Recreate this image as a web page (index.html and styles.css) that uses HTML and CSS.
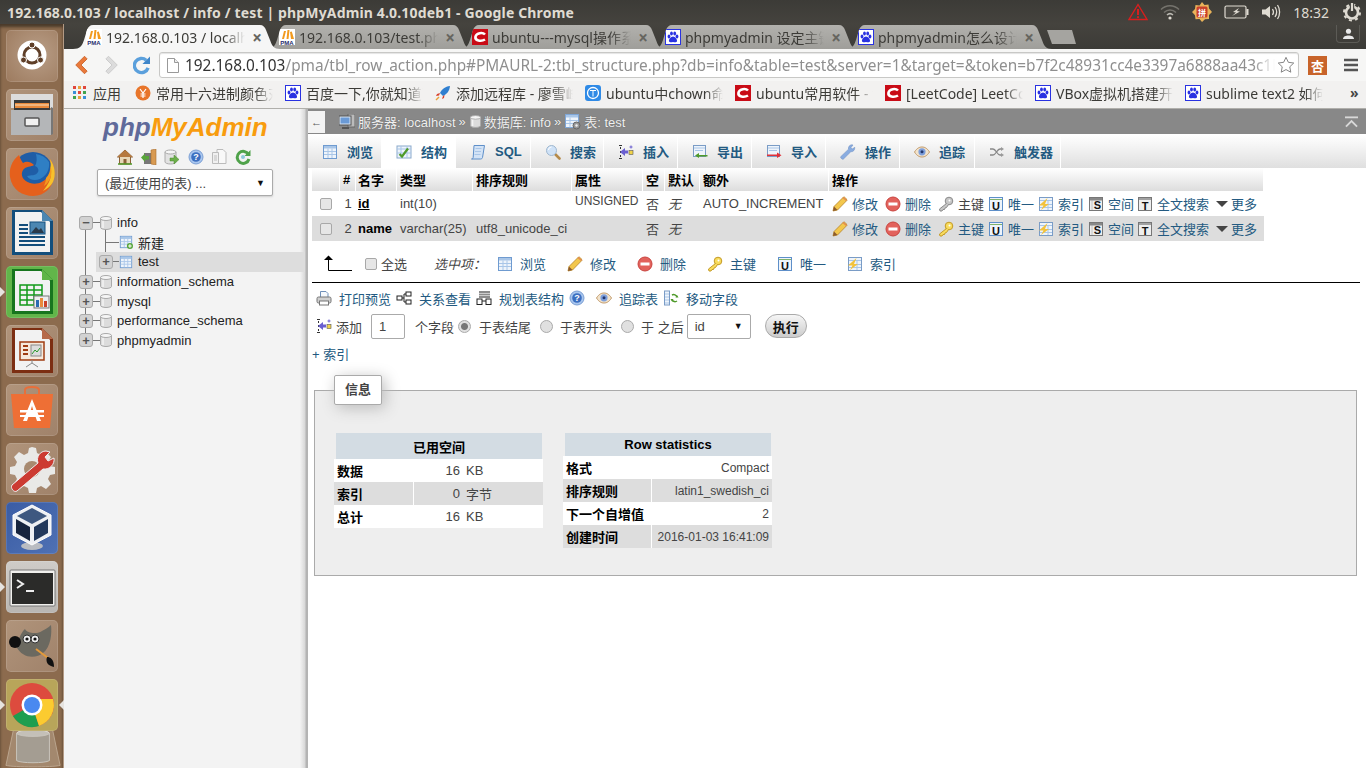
FILE: index.html
```html
<!DOCTYPE html>
<html lang="zh">
<head>
<meta charset="utf-8">
<title>192.168.0.103 / localhost / info / test | phpMyAdmin 4.0.10deb1</title>
<link rel="stylesheet" href="styles.css">
</head>
<body>
<svg class="sprite" width="0" height="0" aria-hidden="true">
<defs>
<symbol id="i-table" viewBox="0 0 16 16"><rect x="1.500" y="1.500" width="13" height="13" fill="#eef4fb" stroke="#6f9bd0"/><rect x="2" y="2" width="12" height="2.500" fill="#a9c6e8"/><path d="M2 7.500h12M2 10.500h12M6 4.500v9.500M10 4.500v9.500" stroke="#a9c6e8" fill="none"/></symbol>
<symbol id="i-struct" viewBox="0 0 16 16"><rect x="1" y="2" width="14" height="12" fill="#eef4fb" stroke="#8aa9cc"/><path d="M5 2v12M11 2v12M1 5h14M1 9h14" stroke="#a9c6e8"/><path d="M3.500 10l2.500 2.500 6-8" stroke="#4f9a2a" stroke-width="2.200" fill="none"/></symbol>
<symbol id="i-sql" viewBox="0 0 16 16"><path d="M4 1.500h10.500l-2 12c-.2 1-1 1.500-2 1.500H1.500c1 0 1.500-.6 1.700-1.500z" fill="#d3e3f6" stroke="#5e8fc9"/><path d="M5.500 4.500h6M5 7.500h6M4.500 10.500h6" stroke="#a9c6e8"/></symbol>
<symbol id="i-search" viewBox="0 0 16 16"><path d="M9.500 9.500l5 5" stroke="#b58a4a" stroke-width="2.600" stroke-linecap="round"/><circle cx="6.500" cy="6.500" r="5" fill="#cfe2f7" stroke="#9fb7cf"/><path d="M3.500 6a3 3 0 0 1 3-3" stroke="#fff" fill="none"/></symbol>
<symbol id="i-insert" viewBox="0 0 16 16"><path d="M1 1.500h3M1 14.500h3M2.500 3v2M2.500 7v2M2.500 11v2" stroke="#333" fill="none"/><path d="M2 8l5-4v2.500h3v3H7V12z" fill="#6a5fd0"/><rect x="11" y="6.500" width="4" height="4" fill="#f1d34a" stroke="#555" stroke-width=".6"/><path d="M13 1.500v3M11.500 3h3" stroke="#6a5fd0"/></symbol>
<symbol id="i-export" viewBox="0 0 16 16"><rect x="1.500" y="1.500" width="12" height="11" fill="#eef4fb" stroke="#7a9cc6"/><path d="M2 4h11M3 6.500h8" stroke="#a9c6e8"/><path d="M15.500 11H7V9l-4 2.500L7 14v-1.500h8.500z" fill="#4f9a2a"/></symbol>
<symbol id="i-import" viewBox="0 0 16 16"><rect x="1.500" y="1.500" width="12" height="11" fill="#eef4fb" stroke="#7a9cc6"/><path d="M2 4h11M3 6.500h8" stroke="#a9c6e8"/><path d="M1 10.500h10V8.500l4.500 2.800L11 14v-2H1z" fill="#e0323a"/></symbol>
<symbol id="i-wrench" viewBox="0 0 16 16"><path d="M2 15c-1-.7-1.600-1.500-1.300-2.300L8.500 5.200C8 3 9.500.8 12 .8l1 .2-2 2.500 1.200 1.500 2.600-1.700c.3 2.600-1.500 4.700-4 4.500L3.500 15c-.5.400-1 .400-1.500 0z" fill="#89ace0" stroke="#6f8fc0" stroke-width=".5"/></symbol>
<symbol id="i-eye" viewBox="0 0 16 16"><path d="M.5 8C3 4 5.500 3 8 3s5 1 7.500 5C13 12 10.500 13 8 13S3 12 .5 8z" fill="#f2e3cc" stroke="#c29a6a"/><circle cx="8" cy="7.800" r="3.600" fill="#7d9fdc"/><circle cx="8" cy="7.800" r="1.500" fill="#23376d"/></symbol>
<symbol id="i-trigger" viewBox="0 0 16 16"><path d="M1 5h3c3 0 4 6 7 6h2M1 11h3c3 0 4-6 7-6h2" stroke="#888" stroke-width="1.300" fill="none"/><path d="M12 3l3 2-3 2zM12 9l3 2-3 2z" fill="#999"/></symbol>
<symbol id="i-pencil" viewBox="0 0 16 16"><path d="M1 15l1-4.500L11.500 1c.8-.5 2.800 1.200 3.500 3.300L5.500 14z" fill="#f3c74c" stroke="#b5842c" stroke-width=".8"/><path d="M1 15l1-4.500 3.500 3.500z" fill="#8c5a2c"/><path d="M11 1.500l3.500 3" stroke="#e48a52" stroke-width="1.500"/></symbol>
<symbol id="i-del" viewBox="0 0 16 16"><circle cx="8" cy="8" r="7" fill="#e2625c" stroke="#c9443f"/><rect x="3.500" y="6.500" width="9" height="3" fill="#fff"/></symbol>
<symbol id="i-key" viewBox="0 0 16 16"><circle cx="11" cy="5" r="3.800" fill="#f8dc5d" stroke="#c49a26"/><path d="M8.500 7.500L1.500 13l.5 2h2l1-1.500h1.500l.5-1.500 1.500-.5 2-3" fill="#f8dc5d" stroke="#c49a26"/><circle cx="11.500" cy="4.500" r="1" fill="#fff"/></symbol>
<symbol id="i-keyg" viewBox="0 0 16 16"><circle cx="11" cy="5" r="3.800" fill="#c6c6c6" stroke="#8a8a8a"/><path d="M8.500 7.500L1.500 13l.5 2h2l1-1.500h1.500l.5-1.500 1.500-.5 2-3" fill="#c6c6c6" stroke="#8a8a8a"/><circle cx="11.500" cy="4.500" r="1" fill="#fff"/></symbol>
<symbol id="i-unique" viewBox="0 0 16 16"><rect x="1.500" y="1.500" width="13" height="13" fill="#eef4fb" stroke="#5e8fc9"/><path d="M2 3.500h12" stroke="#7fb26a"/><text x="8" y="13.500" text-anchor="middle" class="ictext">U</text></symbol>
<symbol id="i-index" viewBox="0 0 16 16"><rect x="1.500" y="1.500" width="13" height="13" fill="#eef4fb" stroke="#7a9cc6"/><path d="M2 4.500h12M10 4.500v9.500M2 8.500h12M2 11.500h12" stroke="#a9c6e8"/><path d="M9.500 2L1 9.500h4.500L3 14l8-6H7z" fill="#f2c23c"/></symbol>
<symbol id="i-space" viewBox="0 0 16 16"><rect x="1.500" y="1.500" width="13" height="13" fill="#eee" stroke="#777"/><rect x="2" y="2" width="12" height="2.500" fill="#888"/><path d="M4 4.500v9.500" stroke="#999" stroke-dasharray="1 1"/><text x="9.500" y="13" text-anchor="middle" class="ictext">S</text></symbol>
<symbol id="i-fulltext" viewBox="0 0 16 16"><rect x="1.500" y="1.500" width="13" height="13" fill="#eee" stroke="#777"/><path d="M2 3h12" stroke="#555"/><text x="8" y="13.500" text-anchor="middle" class="ictext">T</text></symbol>
<symbol id="i-print" viewBox="0 0 16 16"><path d="M4.500 7V1.500h5.500l2 2V7" fill="#f5f8fc" stroke="#6f8fb8"/><rect x="1" y="7" width="14" height="6" rx="1.500" fill="#cfcfcf" stroke="#777"/><rect x="3.500" y="11" width="9" height="4" fill="#fff" stroke="#777"/></symbol>
<symbol id="i-rel" viewBox="0 0 16 16"><rect x="1" y="6" width="5" height="4" fill="#fff" stroke="#222"/><rect x="10" y="2" width="5" height="4" fill="#fff" stroke="#222"/><rect x="10" y="10" width="5" height="4" fill="#fff" stroke="#222"/><path d="M6 8h2V4h2M8 8v4h2" stroke="#222" fill="none"/></symbol>
<symbol id="i-schema" viewBox="0 0 16 16"><rect x="3" y="1" width="11" height="7" fill="#8c8c8c"/><path d="M3 3.500h11M3 5.500h11" stroke="#ccc"/><rect x="1" y="9" width="5" height="5.500" fill="#fff" stroke="#222"/><rect x="10" y="9" width="5" height="5.500" fill="#fff" stroke="#222"/><path d="M6 11h4" stroke="#222"/></symbol>
<symbol id="i-help" viewBox="0 0 16 16"><circle cx="8" cy="8" r="7" fill="#a9c6ee" stroke="#7b9fd4"/><circle cx="8" cy="8" r="4.800" fill="#3c6fc0"/><text x="8" y="11" text-anchor="middle" class="ichelp">?</text></symbol>
<symbol id="i-move" viewBox="0 0 16 16"><rect x="1.500" y="1" width="5" height="14" fill="#eef4fb" stroke="#7a9cc6"/><path d="M2 4h4M2 7h4M2 10h4M2 13h4" stroke="#a9c6e8"/><path d="M9 5a3.500 3.500 0 0 1 5 2M14 11a3.500 3.500 0 0 1-5-1" stroke="#4f9a2a" stroke-width="1.500" fill="none"/><path d="M12.500 7.500h3l-1.500-2.500zM10.500 9h-3l1.500 2.500z" fill="#4f9a2a"/></symbol>
<symbol id="i-db" viewBox="0 0 12 14"><path d="M.5 2.500v9c0 1 2.500 2 5.500 2s5.500-1 5.500-2v-9z" fill="#dcdcdc" stroke="#aaa"/><ellipse cx="6" cy="2.500" rx="5.500" ry="2" fill="#f5f5f5" stroke="#aaa"/><path d="M3 5v7" stroke="#fff"/></symbol>
<symbol id="i-home" viewBox="0 0 16 16"><path d="M8 1L.5 8h2v7h11V8h2z" fill="#e8d8b8" stroke="#8a6238"/><path d="M8 1L.5 8h15z" fill="#b6793e"/><rect x="6.500" y="10" width="3" height="5" fill="#8a6238"/><path d="M1 15h14" stroke="#4f9a2a" stroke-width="1.500"/></symbol>
<symbol id="i-exit" viewBox="0 0 16 16"><rect x="3" y="4" width="7" height="11" fill="#777"/><path d="M10 1l5-1v16l-5-1z" fill="#d89a52" stroke="#a96f30" stroke-width=".6"/><path d="M0 8.500l4-4v2.500h4v3.500H4v2.500z" fill="#58a63a"/></symbol>
<symbol id="i-dbgo" viewBox="0 0 16 16"><path d="M1 3v10c0 1 2.500 2 5.500 2s5.500-1 5.500-2V3z" fill="#e2e2e2" stroke="#aaa"/><ellipse cx="6.500" cy="3" rx="5.500" ry="2" fill="#f6f6f6" stroke="#aaa"/><path d="M6 9h4V6l5 4.500-5 4.500v-3H6z" fill="#6cae4a" stroke="#4a8a2c" stroke-width=".5"/></symbol>
<symbol id="i-docs" viewBox="0 0 16 16"><path d="M6 .5h6l3 3v11H6z" fill="#f8f8f8" stroke="#bbb"/><path d="M1.500 3.500h6v11h-6z" fill="#f0f0f0" stroke="#bbb"/><rect x="3" y="6" width="3" height="6" fill="#d8d8d8"/></symbol>
<symbol id="i-reload" viewBox="0 0 16 16"><path d="M13.500 5.500A6 6 0 1 0 14 10" stroke="#4fa24a" stroke-width="3" fill="none"/><path d="M9.500 7h6V1z" fill="#4fa24a"/><circle cx="8" cy="8" r="2" fill="#8cc9d8"/></symbol>
<symbol id="i-tableadd" viewBox="0 0 16 16"><rect x="1.500" y="1.500" width="13" height="13" fill="#eef4fb" stroke="#6f9bd0"/><rect x="2" y="2" width="12" height="2.500" fill="#a9c6e8"/><path d="M2 7.500h12M2 10.500h12M6 4.500v9.500M10 4.500v9.500" stroke="#a9c6e8"/><circle cx="12.500" cy="12.500" r="3.500" fill="#58a63a"/><path d="M10.500 12.500h4M12.500 10.500v4" stroke="#fff" stroke-width="1.200"/></symbol>
<symbol id="i-server" viewBox="0 0 16 16"><rect x="9" y="0" width="7" height="13" fill="#bbb" stroke="#666"/><rect x="0" y="2" width="12" height="9" fill="#d8e4f2" stroke="#555"/><rect x="1.500" y="3.500" width="9" height="6" fill="#6a9ad6"/><path d="M3 14h7" stroke="#555" stroke-width="2"/></symbol>
<symbol id="i-tblgear" viewBox="0 0 16 16"><rect x=".5" y=".5" width="13" height="13" fill="#eef4fb" stroke="#7fa6d6"/><rect x="1" y="1" width="12" height="2.500" fill="#a9c6e8"/><path d="M1 6.500h12M1 9.500h12M5 3.500v10" stroke="#a9c6e8"/><circle cx="11.500" cy="11.500" r="3.500" fill="#999" stroke="#666"/><circle cx="11.500" cy="11.500" r="1.200" fill="#eee"/></symbol>
<symbol id="f-pma" viewBox="0 0 16 16"><rect width="16" height="16" fill="#fff"/><path d="M3 10l2-8h2L5 10zM7.500 10l1-9h2l-1 9zM12 10l-1-7 1.800-.5L15 10z" fill="#f29a1e"/><text x="8" y="15.500" text-anchor="middle" class="fpma">PMA</text></symbol>
<symbol id="f-csdn" viewBox="0 0 16 16"><rect width="16" height="16" fill="#c90b16"/><path d="M13 5.500C11 3.300 4.500 3.500 3.500 7.500S9 13 13 10.500" fill="none" stroke="#fff" stroke-width="2.600"/></symbol>
<symbol id="f-paw" viewBox="0 0 16 16"><rect x=".5" y=".5" width="15" height="15" fill="#fff" stroke="#2932e1"/><ellipse cx="4" cy="7.500" rx="1.400" ry="1.900" fill="#2932e1"/><ellipse cx="6.500" cy="4.500" rx="1.400" ry="1.900" fill="#2932e1"/><ellipse cx="9.700" cy="4.500" rx="1.400" ry="1.900" fill="#2932e1"/><ellipse cx="12" cy="7.500" rx="1.400" ry="1.900" fill="#2932e1"/><path d="M8 7.500c-2 0-4.500 3-4 4.800.4 1.300 2.500 1 4 .7 1.500.3 3.600.6 4-.7.500-1.800-2-4.800-4-4.800z" fill="#2932e1"/></symbol>
</defs>
</svg>

<header class="titlebar">
  <span class="wintitle">192.168.0.103 / localhost / info / test | phpMyAdmin 4.0.10deb1 - Google Chrome</span>
  <div class="indicators">
    <svg class="ind w20" viewBox="0 0 20 18"><path d="M10 1.500L19 16.500H1z" fill="none" stroke="#d81e1e" stroke-width="1.400"/><path d="M10 6v6" stroke="#d81e1e" stroke-width="2"/><circle cx="10" cy="14.200" r="1.100" fill="#d81e1e"/></svg>
    <svg class="ind w20" viewBox="0 0 20 16"><path d="M1 5.500c5-5 13-5 18 0M4 8.500c3.500-3.500 8.500-3.500 12 0" fill="none" stroke="#75736d" stroke-width="1.500"/><path d="M7 11c2-1.800 4-1.800 6 0" fill="none" stroke="#bdbbb4" stroke-width="1.500"/><circle cx="10" cy="14" r="1.600" fill="#dfdbd2"/></svg>
    <svg class="ind w20" viewBox="0 0 20 20"><path d="M10 0l2.500 3 4-.5.500 4 3 3.500-3 3 .0 4-4 .3L10 20l-2.500-3-4 .3-.5-4-3-3.300 3-3 .5-4 4 .5z" fill="#e9b35a"/><rect x="4.500" y="4.500" width="11" height="11" rx="1.500" fill="#c9402a"/><text x="10" y="13.500" text-anchor="middle" class="pin">拼</text></svg>
    <svg class="ind w25" viewBox="0 0 25 14"><rect x="1" y="1" width="21" height="12" rx="1.500" fill="#4a4843" stroke="#dfdbd2" stroke-width="1.200"/><rect x="22.500" y="4" width="2" height="6" fill="#dfdbd2"/><path d="M15 3l-6 4 3 .5-4 3.500 8-4.500-3-.5z" fill="#dfdbd2"/></svg>
    <svg class="ind w20" viewBox="0 0 20 16"><path d="M1 5.500h3.500L9 2v12l-4.500-3.500H1z" fill="#dfdbd2"/><path d="M11.500 5c1.200 1.800 1.200 4.200 0 6M14 3c2 3 2 7 0 10M16.500 1c2.800 4 2.800 10 0 14" fill="none" stroke="#dfdbd2" stroke-width="1.300"/></svg>
    <span class="clock">18:32</span>
    <svg class="ind w20 last" viewBox="0 0 20 20"><circle cx="10" cy="10.500" r="6" fill="none" stroke="#dfdbd2" stroke-width="2.600"/><circle cx="10" cy="10.500" r="8" fill="none" stroke="#dfdbd2" stroke-width="2" stroke-dasharray="3 3.280"/><path d="M10 1v8" stroke="#3f3e3a" stroke-width="4.400"/><path d="M10 1v8" stroke="#dfdbd2" stroke-width="2.200"/></svg>
  </div>
</header>

<div class="desktop">
<nav class="launcher">
  <div class="tile t-dash"><svg viewBox="0 0 52 52"><circle cx="26" cy="25" r="14.500" fill="#fff"/><circle cx="26" cy="25" r="8" fill="none" stroke="#5f3f28" stroke-width="3"/><circle cx="26" cy="15" r="3" fill="#5f3f28" stroke="#fff"/><circle cx="17.500" cy="30" r="3" fill="#5f3f28" stroke="#fff"/><circle cx="34.500" cy="30" r="3" fill="#5f3f28" stroke="#fff"/></svg></div>
  <div class="tile"><svg viewBox="0 0 52 52"><path d="M5 5h42v14H5z" fill="#dcdcdc"/><rect x="8" y="11" width="36" height="10" fill="#3a3a3a"/><rect x="9" y="14" width="34" height="5" fill="#e98a3c"/><path d="M9 16h34" stroke="#f8e0c0"/><rect x="5" y="21" width="40" height="25" fill="#b4b6b8"/><path d="M45 18l2 1v26l-2 1z" fill="#777"/><rect x="19" y="29" width="14" height="8" rx="1" fill="#f0f0f0" stroke="#555" stroke-width="1.500"/></svg></div>
  <div class="tile"><svg viewBox="0 0 52 52"><circle cx="27" cy="24" r="20" fill="#1f5da6"/><path d="M30 6a19 19 0 0 1 13 8c1 8-3 14-9 17-5 2-11 1-13-3 4-1 9 0 11-4 1-2 0-5-3-6 2-3 2-8 1-12z" fill="#2f7fc4"/><path d="M13 7C5 13 3 22 4 29 6 42 17 48 27 48 39 48 47 39 48 28 49 22 47 15 44 11 46 18 45 24 42 28 38 35 30 37 24 35 17 33 14 27 17 22 20 18 25 19 28 17 24 13 20 13 17 15 15 12 14 10 13 7Z" fill="#e5601c"/><path d="M44 11C49 18 50 27 47 34 45 38 41 41 37 43 42 37 45 31 45 26 45 21 45 16 44 11Z" fill="#f7c12c"/><path d="M40 30c3-3 5-8 4-14 2 5 2 10 0 15-2 3-3 5-6 7 1-3 2-5 2-8z" fill="#f39a1f"/></svg></div>
  <div class="tile"><svg viewBox="0 0 52 52"><path d="M6 3h30l11 11v34H6z" fill="#134e7c"/><path d="M9 5h26l9 10v30H9z" fill="#f2f2f2"/><path d="M36 3l11 11H36z" fill="#4c87b2"/><rect x="13" y="17" width="9" height="2" fill="#134e7c"/><rect x="13" y="21" width="9" height="2" fill="#134e7c"/><rect x="13" y="25" width="9" height="2" fill="#134e7c"/><rect x="24" y="15" width="15" height="12" fill="#4c87b2" stroke="#134e7c"/><path d="M25 26l5-6 3 3 2-2 3 5z" fill="#2a3a4a"/><path d="M13 30h26M13 34h26M13 38h26" stroke="#134e7c" stroke-width="2"/></svg></div>
  <div class="tile t-calc"><svg viewBox="0 0 52 52"><path d="M6 3h30l11 11v34H6z" fill="#17751e"/><path d="M9 5h26l9 10v30H9z" fill="#f2f2f2"/><path d="M36 3l11 11H36z" fill="#5fb548"/><g fill="none" stroke="#129a1a" stroke-width="1.500"><rect x="14" y="19" width="22" height="20"/><path d="M14 24h22M14 29h22M14 34h22M21 19v20M28 19v20"/></g><rect x="28" y="30" width="15" height="12" fill="#eee" stroke="#777"/><rect x="30" y="34" width="3" height="7" fill="#2a6bb2"/><rect x="34" y="32" width="3" height="9" fill="#e98a3c"/><rect x="38" y="35" width="3" height="6" fill="#c9402a"/></svg><i class="pip-l"></i></div>
  <div class="tile"><svg viewBox="0 0 52 52"><path d="M6 3h30l11 11v34H6z" fill="#7c2e12"/><path d="M9 5h26l9 10v30H9z" fill="#f2f2f2"/><path d="M36 3l11 11H36z" fill="#b66a4a"/><rect x="14" y="17" width="24" height="18" fill="#f6e9dc" stroke="#a03c12" stroke-width="1.500"/><path d="M17 21h5M17 25h5M17 29h5" stroke="#a03c12" stroke-width="2"/><rect x="25" y="20" width="10" height="11" fill="#dcdcdc" stroke="#888"/><path d="M26 29l3-4 2 2 3-4" stroke="#2a9a2a" fill="none"/><path d="M26 35v3M26 38l-6 4M26 38l6 4" stroke="#888" fill="none"/></svg></div>
  <div class="tile"><svg viewBox="0 0 52 52"><path d="M19 10V6c0-4 14-4 14 0v4" fill="none" stroke="#e86f3a" stroke-width="2"/><path d="M5 10h42l-3 34H8z" fill="#ee6f35"/><path d="M26 15l-9 22h4l2-6h6l2 6h4zM24.500 27l1.500-5 1.500 5z" fill="#fff"/><rect x="14" y="26" width="24" height="2.500" fill="#fff"/><rect x="14" y="31" width="24" height="2" fill="#fff"/></svg></div>
  <div class="tile"><svg viewBox="0 0 52 52"><path d="M26 4l4 1 1 5 4 2 5-3 5 5-3 5 2 4 5 1v7l-5 1-2 4 3 5-5 5-5-3-4 2-1 5h-7l-1-5-4-2-5 3-5-5 3-5-2-4-5-1v-7l5-1 2-4-3-5 5-5 5 3 4-2 1-5z" fill="#e9e9e7"/><circle cx="26" cy="26" r="8" fill="#a88a70"/><path d="M6 42l26-22c-2-6 2-12 8-12l4 1-5 5 3 4 6-3c1 6-4 12-11 11L11 48c-3 2-7-3-5-6z" fill="#cc3b32" stroke="#eee" stroke-width="1"/></svg></div>
  <div class="tile t-vbox"><svg viewBox="0 0 52 52"><ellipse cx="26" cy="44" rx="11" ry="4" fill="#b9bcc2"/><path d="M26 3L45 13v20L26 43 7 33V13z" fill="#eef0f4" stroke="#fff"/><path d="M26 6L41 14 26 22 11 14z" fill="#3e5880"/><path d="M10 17l14 8v14L10 31z" fill="#16243e"/><path d="M42 17l-14 8v14l14-8z" fill="#22385c"/></svg></div>
  <div class="tile t-term"><svg viewBox="0 0 52 52"><rect x="4" y="9" width="45" height="36" rx="1" fill="#f0efec" stroke="#777"/><rect x="6" y="12" width="41" height="31" fill="#2b2b29"/><path d="M11 19l6 4-6 4" fill="none" stroke="#eee" stroke-width="2"/><path d="M20 30h8" stroke="#eee" stroke-width="2"/></svg><i class="pip-l"></i></div>
  <div class="tile"><svg viewBox="0 0 52 52"><path d="M10 26c3-8 6-15 9-17 2 5 14 5 17 2 3-2 6-3 9-6 1 8 0 22-8 28-6 5-20 7-27-7z" fill="#6b6960"/><circle cx="9" cy="22" r="6" fill="#111"/><circle cx="21" cy="19" r="4" fill="#eee" stroke="#333"/><circle cx="21" cy="19" r="1.600" fill="#111"/><circle cx="29" cy="19" r="4" fill="#eee" stroke="#333"/><circle cx="29" cy="19" r="1.600" fill="#111"/><path d="M30 29l12 9" stroke="#e39a3a" stroke-width="2"/><path d="M41 37c3 0 7 2 7 10-5-1-9-4-7-10z" fill="#111"/></svg></div>
  <div class="tile t-chrome"><svg viewBox="0 0 52 52"><circle cx="26" cy="26" r="22" fill="#dd4b3e"/><path d="M26 26L7 37A22 22 0 0 0 33 47z" fill="#1d9e4f"/><path d="M26 26l7 21A22 22 0 0 0 47 20H26z" fill="#fbcb30"/><circle cx="26" cy="26" r="10.500" fill="#fff"/><circle cx="26" cy="26" r="8" fill="#4a89f0"/></svg><i class="pip-l"></i><i class="pip-r"></i></div>
  <div class="trash"><svg viewBox="0 0 60 44"><path d="M10 2h40l8 38c-8 2-48 2-56 0z" fill="#a3886e" stroke="#bca68f"/><ellipse cx="30" cy="7" rx="17" ry="4" fill="#c4c0b8" stroke="#ddd9d2"/><path d="M13 7v28c4 3 30 3 34 0V7c-4 4-30 4-34 0z" fill="#a49d92" stroke="#c9c5bd"/></svg></div>
</nav>

<div class="browser">
  <div class="tabstrip">
    <div class="tab active"><svg class="fav"><use href="#f-pma"/></svg><span class="tabtext">192.168.0.103 / localhost / info / test | phpMyAdmin</span><span class="tabx">×</span></div>
    <div class="tab"><svg class="fav"><use href="#f-pma"/></svg><span class="tabtext">192.168.0.103/test.php</span><span class="tabx">×</span></div>
    <div class="tab"><svg class="fav"><use href="#f-csdn"/></svg><span class="tabtext">ubuntu---mysql操作系统安装</span><span class="tabx">×</span></div>
    <div class="tab"><svg class="fav"><use href="#f-paw"/></svg><span class="tabtext">phpmyadmin 设定主键_百度</span><span class="tabx">×</span></div>
    <div class="tab"><svg class="fav"><use href="#f-paw"/></svg><span class="tabtext">phpmyadmin怎么设计表_百度</span><span class="tabx">×</span></div>
    <div class="newtab"></div>
    <div class="account"><svg viewBox="0 0 14 12"><circle cx="7" cy="3.500" r="2.800" fill="#e8e8e8"/><path d="M1 12c0-5 12-5 12 0z" fill="#e8e8e8"/></svg></div>
  </div>

  <div class="toolbar">
    <svg class="navbtn nb-back" viewBox="0 0 16 22"><path d="M12 1L2 11l10 10 3-3-7-7 7-7z" fill="#e9793a" stroke="#c9622a"/></svg>
    <svg class="navbtn nb-fwd" viewBox="0 0 16 22"><path d="M4 1l10 10L4 21l-3-3 7-7-7-7z" fill="#dcdcdc" stroke="#c8c8c8"/></svg>
    <svg class="navbtn nb-rel" viewBox="0 0 18 20"><path d="M14 5A7.500 7.500 0 1 0 16 13" fill="none" stroke="#5ba0dc" stroke-width="3.600"/><path d="M10 9h8V1z" fill="#3f86c9"/></svg>
    <div class="omnibox">
      <svg class="pageic" viewBox="0 0 12 15"><path d="M.5.500h7l4 4v10H.5z" fill="#fff" stroke="#999"/><path d="M7.500.500v4h4" fill="#eee" stroke="#999"/></svg>
      <span class="url"><b>192.168.0.103</b>/pma/tbl_row_action.php#PMAURL-2:tbl_structure.php?db=info&amp;table=test&amp;server=1&amp;target=&amp;token=b7f2c48931cc4e3397a6888aa43c1b0e2f</span>
      <svg class="star" viewBox="0 0 20 20"><path d="M10 1.500l2.600 5.500 6 .8-4.400 4.200 1.100 6L10 15.100 4.700 18l1.100-6L1.400 7.800l6-.8z" fill="#fff" stroke="#777"/></svg>
    </div>
    <div class="ext"><span>杏</span></div>
    <svg class="hamb" viewBox="0 0 14 14"><path d="M0 2h14M0 7h14M0 12h14" stroke="#555" stroke-width="2.600"/></svg>
  </div>

  <div class="bookmarks">
    <div class="apps"><svg class="gridic" viewBox="0 0 13 13"><g><rect width="3" height="3" fill="#e0463c"/><rect x="5" width="3" height="3" fill="#e9a23a"/><rect x="10" width="3" height="3" fill="#e0463c"/><rect y="5" width="3" height="3" fill="#3a8fd8"/><rect x="5" y="5" width="3" height="3" fill="#e0463c"/><rect x="10" y="5" width="3" height="3" fill="#3fa34d"/><rect y="10" width="3" height="3" fill="#3fa34d"/><rect x="5" y="10" width="3" height="3" fill="#e9a23a"/><rect x="10" y="10" width="3" height="3" fill="#3a8fd8"/></g></svg><span>应用</span></div>
    <div class="bm"><svg class="fav" viewBox="0 0 16 16"><circle cx="8" cy="8" r="7.500" fill="#e8752a"/><path d="M5 4l3 4 3-4M8 8v5M5.500 9h5M5.500 11h5" stroke="#fff" stroke-width="1.200" fill="none"/></svg><span class="bmtext">常用十六进制颜色对照表</span></div>
    <div class="bm"><svg class="fav"><use href="#f-paw"/></svg><span class="bmtext">百度一下,你就知道百度</span></div>
    <div class="bm"><svg class="fav" viewBox="0 0 16 16"><path d="M15 1c-5 .5-8 3-10 7l3 3c4-2 6.500-5 7-10z" fill="#2f7fd0"/><path d="M5 8L2 9l-1 2 3-.5zM8 11l-1 3 2-1 .5-3z" fill="#d8402c"/><path d="M4 12l-3 3" stroke="#e9a23a" stroke-width="1.500"/></svg><span class="bmtext">添加远程库 - 廖雪峰的官方</span></div>
    <div class="bm"><svg class="fav" viewBox="0 0 16 16"><rect width="16" height="16" rx="3" fill="#2f8ae6"/><circle cx="8" cy="8" r="5.500" fill="none" stroke="#fff" stroke-width="1.300"/><path d="M5 5.500h6M8 5.500v6" stroke="#fff"/></svg><span class="bmtext">ubuntu中chown命令的使用</span></div>
    <div class="bm"><svg class="fav"><use href="#f-csdn"/></svg><span class="bmtext">ubuntu常用软件 - 博客频道</span></div>
    <div class="bm"><svg class="fav"><use href="#f-csdn"/></svg><span class="bmtext">[LeetCode] LeetCode 题解</span></div>
    <div class="bm"><svg class="fav"><use href="#f-paw"/></svg><span class="bmtext">VBox虚拟机搭建开发环境</span></div>
    <div class="bm"><svg class="fav"><use href="#f-paw"/></svg><span class="bmtext">sublime text2 如何配置</span></div>
    <span class="more">»</span>
  </div>

  <div class="viewport">
    <aside class="sidebar">
      <div class="logo"><span class="php">php</span><span class="my">MyAdmin</span></div>
      <div class="navicons">
        <svg class="ic"><use href="#i-home"/></svg><svg class="ic"><use href="#i-exit"/></svg><svg class="ic"><use href="#i-dbgo"/></svg><svg class="ic"><use href="#i-help"/></svg><svg class="ic"><use href="#i-docs"/></svg><svg class="ic"><use href="#i-reload"/></svg>
      </div>
      <div class="recent"><span>(最近使用的表) ...</span><span class="arrow">▼</span></div>
      <div class="tree">
        <div class="node"><span class="exp">−</span><i class="conn"></i><svg class="dbic"><use href="#i-db"/></svg><span>info</span></div>
        <div class="node sub"><i class="conn2"></i><svg class="ic tb"><use href="#i-tableadd"/></svg><span>新建</span></div>
        <div class="node sub cur"><span class="exp">+</span><i class="conn conn-s"></i><svg class="ic tb"><use href="#i-table"/></svg><span>test</span></div>
        <div class="node"><span class="exp">+</span><i class="conn"></i><svg class="dbic"><use href="#i-db"/></svg><span>information_schema</span></div>
        <div class="node"><span class="exp">+</span><i class="conn"></i><svg class="dbic"><use href="#i-db"/></svg><span>mysql</span></div>
        <div class="node"><span class="exp">+</span><i class="conn"></i><svg class="dbic"><use href="#i-db"/></svg><span>performance_schema</span></div>
        <div class="node"><span class="exp">+</span><i class="conn"></i><svg class="dbic"><use href="#i-db"/></svg><span>phpmyadmin</span></div>
      </div>
    </aside>

    <main class="page">
      <div class="crumbs">
        <span class="backbtn">←</span>
        <svg class="ic"><use href="#i-server"/></svg><span>服务器: localhost</span><span class="sep">»</span>
        <svg class="dbsm"><use href="#i-db"/></svg><span>数据库: info</span><span class="sep">»</span>
        <svg class="ic"><use href="#i-tblgear"/></svg><span>表: test</span>
        <svg class="collapse" viewBox="0 0 14 12"><path d="M0 1h14" stroke="#d8d8d8" stroke-width="2"/><path d="M1 11l6-6 6 6" fill="none" stroke="#d8d8d8" stroke-width="2"/></svg>
      </div>
      <div class="menu">
        <a class="mtab"><svg class="ic"><use href="#i-table"/></svg>浏览</a>
        <a class="mtab on"><svg class="ic"><use href="#i-struct"/></svg>结构</a>
        <a class="mtab wide"><svg class="ic"><use href="#i-sql"/></svg>SQL</a>
        <a class="mtab narrow"><svg class="ic"><use href="#i-search"/></svg>搜索</a>
        <a class="mtab"><svg class="ic"><use href="#i-insert"/></svg>插入</a>
        <a class="mtab"><svg class="ic"><use href="#i-export"/></svg>导出</a>
        <a class="mtab"><svg class="ic"><use href="#i-import"/></svg>导入</a>
        <a class="mtab"><svg class="ic"><use href="#i-wrench"/></svg>操作</a>
        <a class="mtab wide"><svg class="ic"><use href="#i-eye"/></svg>追踪</a>
        <a class="mtab trig"><svg class="ic"><use href="#i-trigger"/></svg>触发器</a>
      </div>

      <table class="struct">
        <colgroup><col class="k0"><col class="k1"><col class="k2"><col class="k3"><col class="k4"><col class="k5"><col class="k6"><col class="k7"><col class="k8"><col class="k9"></colgroup>
        <thead><tr><th></th><th>#</th><th>名字</th><th>类型</th><th>排序规则</th><th>属性</th><th>空</th><th>默认</th><th>额外</th><th>操作</th></tr></thead>
        <tbody>
          <tr>
            <td class="ctr"><i class="check"></i></td><td class="ctr">1</td><td><b class="pk">id</b></td><td>int(10)</td><td></td><td class="attr">UNSIGNED</td><td>否</td><td class="em">无</td><td>AUTO_INCREMENT</td>
            <td><div class="acts">
              <a class="act w53"><svg class="ic"><use href="#i-pencil"/></svg>修改</a>
              <a class="act w53"><svg class="ic"><use href="#i-del"/></svg>删除</a>
              <a class="act w50 plain"><svg class="ic"><use href="#i-keyg"/></svg>主键</a>
              <a class="act w50"><svg class="ic"><use href="#i-unique"/></svg>唯一</a>
              <a class="act w50"><svg class="ic"><use href="#i-index"/></svg>索引</a>
              <a class="act w49"><svg class="ic"><use href="#i-space"/></svg>空间</a>
              <a class="act w79"><svg class="ic"><use href="#i-fulltext"/></svg>全文搜索</a>
              <a class="act mored"><i class="tri"></i>更多</a>
            </div></td>
          </tr>
          <tr class="alt">
            <td class="ctr"><i class="check"></i></td><td class="ctr">2</td><td><b>name</b></td><td>varchar(25)</td><td>utf8_unicode_ci</td><td></td><td>否</td><td class="em">无</td><td></td>
            <td><div class="acts">
              <a class="act w53"><svg class="ic"><use href="#i-pencil"/></svg>修改</a>
              <a class="act w53"><svg class="ic"><use href="#i-del"/></svg>删除</a>
              <a class="act w50"><svg class="ic"><use href="#i-key"/></svg>主键</a>
              <a class="act w50"><svg class="ic"><use href="#i-unique"/></svg>唯一</a>
              <a class="act w50"><svg class="ic"><use href="#i-index"/></svg>索引</a>
              <a class="act w49"><svg class="ic"><use href="#i-space"/></svg>空间</a>
              <a class="act w79"><svg class="ic"><use href="#i-fulltext"/></svg>全文搜索</a>
              <a class="act mored"><i class="tri"></i>更多</a>
            </div></td>
          </tr>
        </tbody>
      </table>

      <div class="withsel">
        <svg class="uparrow" viewBox="0 0 28 16"><path d="M4.500 4v11.500H28" fill="none" stroke="#000"/><path d="M0 5l4.500-4.500L9 5z" fill="#000"/></svg>
        <i class="check"></i><span class="all">全选</span>
        <em class="selected">选中项：</em>
        <a class="bulk"><svg class="ic"><use href="#i-table"/></svg>浏览</a>
        <a class="bulk"><svg class="ic"><use href="#i-pencil"/></svg>修改</a>
        <a class="bulk"><svg class="ic"><use href="#i-del"/></svg>删除</a>
        <a class="bulk"><svg class="ic"><use href="#i-key"/></svg>主键</a>
        <a class="bulk"><svg class="ic"><use href="#i-unique"/></svg>唯一</a>
        <a class="bulk"><svg class="ic"><use href="#i-index"/></svg>索引</a>
      </div>

      <div class="links">
        <a class="lk"><svg class="ic"><use href="#i-print"/></svg>打印预览</a>
        <a class="lk"><svg class="ic"><use href="#i-rel"/></svg>关系查看</a>
        <a class="lk"><svg class="ic"><use href="#i-schema"/></svg>规划表结构</a>
        <svg class="ic help"><use href="#i-help"/></svg>
        <a class="lk"><svg class="ic"><use href="#i-eye"/></svg>追踪表</a>
        <a class="lk"><svg class="ic"><use href="#i-move"/></svg>移动字段</a>
      </div>

      <form class="addrow">
        <svg class="ic"><use href="#i-insert"/></svg>
        <span class="a1">添加</span>
        <span class="numbox">1</span>
        <span class="a2">个字段</span>
        <i class="radio on"></i><span class="rl">于表结尾</span>
        <i class="radio"></i><span class="rl rl-b">于表开头</span>
        <i class="radio"></i><span class="rl rl-c">于 之后</span>
        <div class="colsel"><span>id</span><span class="arrow">▼</span></div>
        <span class="go">执行</span>
      </form>

      <a class="plusidx">+ 索引</a>

      <fieldset class="info">
        <legend>信息</legend>
        <div class="infotables">
          <table class="t-space">
            <colgroup><col class="s1"><col class="s2"><col class="s3"></colgroup>
            <thead><tr><th colspan="3">已用空间</th></tr></thead>
            <tbody>
              <tr><td class="lb">数据</td><td class="val">16</td><td class="unit">KB</td></tr>
              <tr class="alt"><td class="lb">索引</td><td class="val">0</td><td class="unit">字节</td></tr>
              <tr><td class="lb">总计</td><td class="val">16</td><td class="unit">KB</td></tr>
            </tbody>
          </table>
          <table class="t-stats">
            <colgroup><col class="stat1"><col class="stat2"></colgroup>
            <thead><tr><th colspan="2">Row statistics</th></tr></thead>
            <tbody>
              <tr><td class="lb">格式</td><td class="val">Compact</td></tr>
              <tr class="alt"><td class="lb">排序规则</td><td class="val">latin1_swedish_ci</td></tr>
              <tr><td class="lb">下一个自增值</td><td class="val">2</td></tr>
              <tr class="alt"><td class="lb">创建时间</td><td class="val">2016-01-03 16:41:09</td></tr>
            </tbody>
          </table>
        </div>
      </fieldset>
    </main>
  </div>
</div>
</div>
</body>
</html>
```

FILE: styles.css
```css
* { box-sizing: border-box; }
html, body { margin: 0; height: 768px; overflow: hidden; }
body {
  width: 1366px;
  display: flex;
  flex-direction: column;
  font: 13px "Liberation Sans", "Noto Sans CJK SC", sans-serif;
  color: #444;
  background: #3f3e3a;
}
.sprite { position: absolute; }
.ictext { font: bold 11px "Liberation Sans", sans-serif; fill: #111; }
.ichelp { font: bold 9px "Liberation Sans", sans-serif; fill: #fff; }
.fpma { font: bold 6px "Liberation Sans", sans-serif; fill: #1f2a6b; }
.pin { font: bold 8px "Noto Sans CJK SC", sans-serif; fill: #fff; }
.ic { width: 16px; height: 16px; flex: none; }
a { color: #235a81; }

/* top panel */
.titlebar {
  height: 24px;
  flex: none;
  display: flex;
  align-items: center;
  padding-left: 7px;
  background: linear-gradient(#3c3b37, #45433e);
  color: #dfdbd2;
}
.wintitle { font: bold 14px "Noto Sans", sans-serif; letter-spacing: .15px; white-space: nowrap; }
.indicators { margin-left: auto; display: flex; align-items: center; }
.ind { flex: none; height: 20px; }
.w20 { width: 20px; }
.w25 { width: 25px; }
.indicators .ind { margin-right: 12px; }
.clock { font: 14px "Noto Sans", sans-serif; margin-right: 13px; }
.indicators .last { margin-right: 4px; }

.desktop { flex: 1; display: flex; min-height: 0; }

/* launcher */
.launcher {
  width: 64px;
  flex: none;
  padding: 6px 0 0 6px;
  display: flex;
  flex-direction: column;
  gap: 7px;
  background: #8c6b4e;
  border-right: 1px solid #b39a84;
  box-shadow: inset 0 3px 3px #4a3a2a;
}
.tile {
  width: 52px;
  height: 52px;
  flex: none;
  border-radius: 5px;
  position: relative;
  background: linear-gradient(135deg, #b0947b, #a0826a);
  box-shadow: inset 0 0 0 1px rgba(255,255,255,.12);
}
.tile svg { display: block; width: 52px; height: 52px; }
.t-dash { background: radial-gradient(circle at 60% 45%, #b99e87, #9c7a5e); }
.t-calc { background: #62b54a; }
.t-vbox { background: linear-gradient(135deg, #3a5ca4, #4f71b4); }
.t-term { background: linear-gradient(#cfccc8, #b9b6b2); }
.t-chrome { background: #b8a55a; }
.pip-l, .pip-r { position: absolute; top: 21px; width: 0; height: 0; border-style: solid; border-color: transparent; }
.pip-l { left: -6px; border-width: 5px 0 5px 5px; border-left-color: #e6e3df; }
.pip-r { right: -6px; border-width: 5px 5px 5px 0; border-right-color: #e6e3df; }
.trash { margin-top: -12px; margin-left: -2px; width: 58px; height: 44px; }
.trash svg { display: block; width: 58px; height: 44px; }

/* browser frame */
.browser { flex: 1; min-width: 0; display: flex; flex-direction: column; }
.tabstrip {
  height: 25px;
  flex: none;
  display: flex;
  padding-left: 9px;
  background: linear-gradient(#45433e, #3c3b37);
  align-items: flex-end;
}
.tab {
  width: 207px;
  height: 24px;
  flex: none;
  margin-right: -14px;
  padding: 0 15px 0 13px;
  display: flex;
  align-items: center;
  font: 14px "Noto Sans", "Noto Sans CJK SC", sans-serif;
  color: #3c3b37;
  background: linear-gradient(#b2b1ad, #9f9e9a);
  clip-path: path("M0 24C7 24 9 21 11 15L14 5C15 2 17 0 20 0H187C190 0 192 2 193 5L197 15C199 21 201 24 207 24Z");
}
.tab.active { background: #f6f6f6; position: relative; z-index: 2; }
.fav { width: 16px; height: 16px; flex: none; }
.tabtext {
  flex: none;
  width: 139px;
  margin-left: 4px;
  overflow: hidden;
  white-space: nowrap;
  -webkit-mask-image: linear-gradient(to right, #000 85%, transparent);
  mask-image: linear-gradient(to right, #000 85%, transparent);
}
.tabx { margin-left: 6px; font-size: 17px; font-weight: bold; color: #66655f; width: 12px; text-align: center; }
.newtab {
  width: 29px;
  height: 14px;
  flex: none;
  margin: 0 0 5px 9px;
  background: #a5a4a0;
  clip-path: polygon(0 0, 25px 0, 29px 100%, 5px 100%);
}
.account {
  margin: 0 6px 6px auto;
  width: 24px;
  height: 18px;
  border: 1px solid #5c5b56;
  border-top: 0;
  border-radius: 0 0 4px 4px;
  display: flex;
  align-items: center;
  justify-content: center;
}
.account svg { width: 13px; height: 11px; }

.toolbar {
  height: 32px;
  flex: none;
  display: flex;
  align-items: center;
  background: #f6f6f5;
}
.navbtn { flex: none; }
.nb-back { width: 14px; height: 20px; margin-left: 10px; }
.nb-fwd { width: 14px; height: 20px; margin-left: 17px; }
.nb-rel { width: 17px; height: 20px; margin-left: 14px; }
.omnibox {
  width: 1140px;
  height: 26px;
  flex: none;
  margin-left: 9px;
  padding: 0 3px 0 7px;
  display: flex;
  align-items: center;
  background: #fff;
  border: 1px solid #c8c8c6;
  border-radius: 3px;
  box-shadow: inset 0 1px 1px #e4e4e4;
}
.pageic { width: 12px; height: 15px; flex: none; }
.url {
  flex: 1;
  min-width: 0;
  margin-left: 6px;
  font: 15.400px "Noto Sans", sans-serif;
  color: #8f8f8f;
  white-space: nowrap;
  overflow: hidden;
  -webkit-mask-image: linear-gradient(to right, #000 98%, transparent);
  mask-image: linear-gradient(to right, #000 98%, transparent);
}
.url b { font-weight: normal; color: #333; }
.star { width: 18px; height: 18px; flex: none; margin-left: 2px; }
.ext {
  width: 19px;
  height: 19px;
  flex: none;
  margin-left: 9px;
  display: flex;
  align-items: center;
  justify-content: center;
  background: #c8642a;
  color: #fff;
  font: bold 13px "Noto Sans CJK SC", sans-serif;
}
.hamb { width: 14px; height: 14px; flex: none; margin-left: 17px; }

.bookmarks {
  height: 28px;
  flex: none;
  display: flex;
  align-items: center;
  padding: 0 0 4px 9px;
  background: #f2f1f0;
  border-bottom: 1px solid #b0afab;
  font: 14px "Noto Sans", "Noto Sans CJK SC", sans-serif;
  color: #3c3b37;
}
.apps { width: 62px; flex: none; display: flex; align-items: center; gap: 7px; }
.gridic { width: 13px; height: 13px; }
.bm { width: 150px; flex: none; display: flex; align-items: center; gap: 5px; }
.bmtext {
  width: 117px;
  flex: none;
  overflow: hidden;
  white-space: nowrap;
  -webkit-mask-image: linear-gradient(to right, #000 85%, transparent);
  mask-image: linear-gradient(to right, #000 85%, transparent);
}
.more { font-size: 14px; font-weight: bold; color: #444; padding-left: 15px; }

.viewport { flex: 1; min-height: 0; display: flex; background: #fff; }

/* navigation panel */
.sidebar {
  width: 244px;
  flex: none;
  display: flex;
  flex-direction: column;
  background: linear-gradient(to right, #f3f3f3 236px, #d8d8d8 241px, #b4b4b4 242px);
  color: #222;
}
.logo {
  height: 36px;
  padding-left: 39px;
  display: flex;
  align-items: center;
  font: italic bold 26px "Liberation Sans", sans-serif;
}
.php { color: #5f6a9a; }
.my { color: #f89c0e; }
.navicons { height: 24px; padding: 0 0 0 53px; display: flex; align-items: center; gap: 7.600px; }
.recent {
  width: 176px;
  height: 27px;
  flex: none;
  margin-left: 33px;
  padding: 0 7px 0 7px;
  display: flex;
  align-items: center;
  justify-content: space-between;
  background: #fff;
  border: 1px solid #aaa;
  border-radius: 2px;
  box-shadow: 0 1px 2px #ccc;
  font-size: 13px;
  color: #444;
}
.arrow { font-size: 9px; color: #111; }
.tree { margin-top: 17px; position: relative; }
.tree::before, .tree::after { content: ""; position: absolute; width: 1px; background: #777; }
.tree::before { left: 21px; top: 9px; height: 118px; }
.tree::after { left: 41px; top: 9px; height: 40px; }
.node {
  height: 19.600px;
  display: flex;
  align-items: center;
  padding-left: 15px;
  position: relative;
  z-index: 1;
  font-size: 13px;
}
.exp {
  width: 14px;
  height: 14px;
  flex: none;
  display: flex;
  align-items: center;
  justify-content: center;
  border: 1px solid #aaa;
  border-radius: 3px;
  background: #d2d2d2;
  color: #555;
  font: bold 13px "Liberation Sans", sans-serif;
  line-height: 1;
}
.conn { width: 7px; height: 1px; background: #777; flex: none; }
.conn2 { width: 14px; height: 1px; background: #777; flex: none; margin-left: 26px; }
.conn-s { width: 6px; }
.dbic { width: 12px; height: 14px; flex: none; margin-right: 5px; }
.node .tb { width: 14px; height: 14px; margin-right: 5px; }
.node.sub { padding-left: 0; }
.node.cur { margin-left: 32px; padding-left: 3px; margin-right: 3px; background: #ddd; }
.node.sub:not(.cur) { padding-left: 15px; }

/* page */
.page { flex: 1; min-width: 0; display: flex; flex-direction: column; }
.crumbs {
  height: 26px;
  flex: none;
  display: flex;
  align-items: center;
  gap: 3px;
  background: #888;
  color: #f0f0f0;
  text-shadow: 0 0 1px #555;
  border-bottom: 1px solid #fff;
}
.backbtn {
  width: 17px;
  height: 22px;
  flex: none;
  margin-right: 11px;
  display: flex;
  align-items: center;
  justify-content: center;
  background: #f3f3f3;
  color: #555;
  text-shadow: none;
  font-size: 11px;
}
.sep { margin: 0 1px 0 0; }
.dbsm { width: 11px; height: 13px; }
.collapse { width: 13px; height: 12px; margin-left: auto; margin-right: 8px; }
.menu {
  height: 33px;
  flex: none;
  display: flex;
  background: linear-gradient(#fff, #dfdfdf);
}
.mtab {
  width: 74px;
  flex: none;
  padding-left: 14px;
  display: flex;
  align-items: center;
  gap: 9px;
  border-right: 1px solid #fff;
  font-weight: bold;
}
.mtab.on { background: #fff; }
.mtab.wide { width: 75px; }
.mtab.narrow { width: 73px; }
.mtab.trig { width: 86px; }

table { border-collapse: separate; border-spacing: 0; }
.struct { margin-left: 4px; width: 952px; table-layout: fixed; }
.k0 { width: 28px; } .k1 { width: 16px; } .k2 { width: 41px; } .k3 { width: 76px; } .k4 { width: 99px; }
.k5 { width: 71px; } .k6 { width: 22px; } .k7 { width: 35px; } .k8 { width: 129px; } .k9 { width: 435px; }
.struct th {
  height: 23px;
  padding: 0 3px;
  text-align: left;
  font-size: 13px;
  color: #000;
  background: linear-gradient(#fff, #ddd);
  border-right: 1px solid #fff;
}
.struct td { height: 25px; padding: 0 3px; white-space: nowrap; overflow: hidden; }
.struct td:nth-child(3), .struct th:nth-child(3) { padding-left: 2px; }
.struct .alt td { background: #ddd; }
.ctr { text-align: center; }
.struct td b { color: #000; }
.pk { text-decoration: underline; }
.struct .attr { vertical-align: top; padding-top: 3px; font-size: 12px; }
.em { font-style: italic; }
.check {
  display: block;
  width: 12px;
  height: 12px;
  flex: none;
  margin: 0 auto;
  background: #e6e6e6;
  border: 1px solid #a8a8a8;
  border-radius: 2px;
}
.acts { display: flex; align-items: center; }
.act { display: flex; align-items: center; gap: 4px; flex: none; }
.act.plain { color: #444; }
.w53 { width: 53px; } .w50 { width: 50px; } .w49 { width: 49px; } .w79 { width: 79px; }
.mored { gap: 3px; }
.tri { width: 0; height: 0; border: 6px solid transparent; border-top: 6px solid #444; border-bottom: 0; }

.withsel {
  height: 42px;
  flex: none;
  margin-left: 4px;
  margin-right: 6px;
  padding-top: 4px;
  display: flex;
  align-items: center;
  border-bottom: 1px solid #000;
}
.uparrow { width: 28px; height: 16px; flex: none; margin: -2px 13px 0 12px; }
.withsel .check { margin: 0; }
.all { margin-left: 4px; margin-right: 27px; }
.selected { width: 63px; flex: none; font-style: italic; }
.bulk { display: flex; align-items: center; gap: 7px; margin-right: 21px; }

.links { height: 30px; flex: none; margin-left: 8px; display: flex; align-items: center; }
.lk { display: flex; align-items: center; gap: 7px; margin-right: 5px; }
.help { margin-right: 11px; }

.addrow { height: 26px; flex: none; margin-left: 8px; display: flex; align-items: center; }
.a1 { margin-left: 4px; color: #444; }
.numbox {
  width: 34px;
  height: 25px;
  margin-left: 9px;
  padding-left: 7px;
  display: flex;
  align-items: center;
  background: #fff;
  border: 1px solid #aaa;
  border-radius: 2px;
}
.a2 { margin: 0 4px 0 10px; }
.radio {
  width: 13px;
  height: 13px;
  flex: none;
  border-radius: 50%;
  background: #e0e0e0;
  border: 1px solid #aaa;
}
.radio.on { background: radial-gradient(circle, #777 3px, #e0e0e0 4px); }
.rl { margin: 0 9px 0 8px; }
.rl.rl-b { margin-left: 7px; }
.rl.rl-c { margin: 0 3px 0 7px; }
.colsel {
  width: 64px;
  height: 25px;
  flex: none;
  padding: 0 7px;
  display: flex;
  align-items: center;
  justify-content: space-between;
  background: #fff;
  border: 1px solid #aaa;
  border-radius: 2px;
}
.go {
  width: 42px;
  height: 24px;
  flex: none;
  margin-left: 14px;
  display: flex;
  align-items: center;
  justify-content: center;
  font-weight: bold;
  color: #111;
  background: linear-gradient(#f6f6f6, #ccc);
  border: 1px solid #aaa;
  border-radius: 12px;
}
.plusidx { margin: 7px 0 0 4px; height: 18px; line-height: 18px; color: #235a81; }

.info {
  margin: 11px 9px 0 6px;
  padding: 28px 0 27px 19px;
  min-width: 0;
  background: #eee;
  border: 1px solid #aaa;
}
.info legend {
  margin-left: 0;
  padding: 0 10px;
  height: 30px;
  line-height: 28px;
  font-weight: bold;
  background: #fff;
  border: 1px solid #aaa;
  border-radius: 2px;
  box-shadow: 3px 3px 15px #bbb;
}
.infotables { display: flex; gap: 20px; align-items: flex-start; }
.infotables th {
  color: #000;
  background: #d3dce3;
  border-left: 2px solid #eee;
  border-right: 1px solid #eee;
  font-weight: bold;
}
.infotables td { height: 23px; background: #fff; padding: 0 3px; white-space: nowrap; }
.infotables .alt td { background: #ddd; }
.infotables .lb { font-weight: bold; color: #000; }
.t-space, .t-stats { width: 209px; table-layout: fixed; }
.s1 { width: 79px; } .s2 { width: 50px; } .s3 { width: 80px; }
.stat1 { width: 88px; } .stat2 { width: 121px; }
.t-space th { height: 26px; }
.t-space .val { text-align: right; }
.t-stats th { height: 23px; }
.t-stats .val { text-align: right; font-size: 12px; border-left: 1px solid #fff; }
.t-space .alt .val { border-left: 1px solid #fff; }
```
